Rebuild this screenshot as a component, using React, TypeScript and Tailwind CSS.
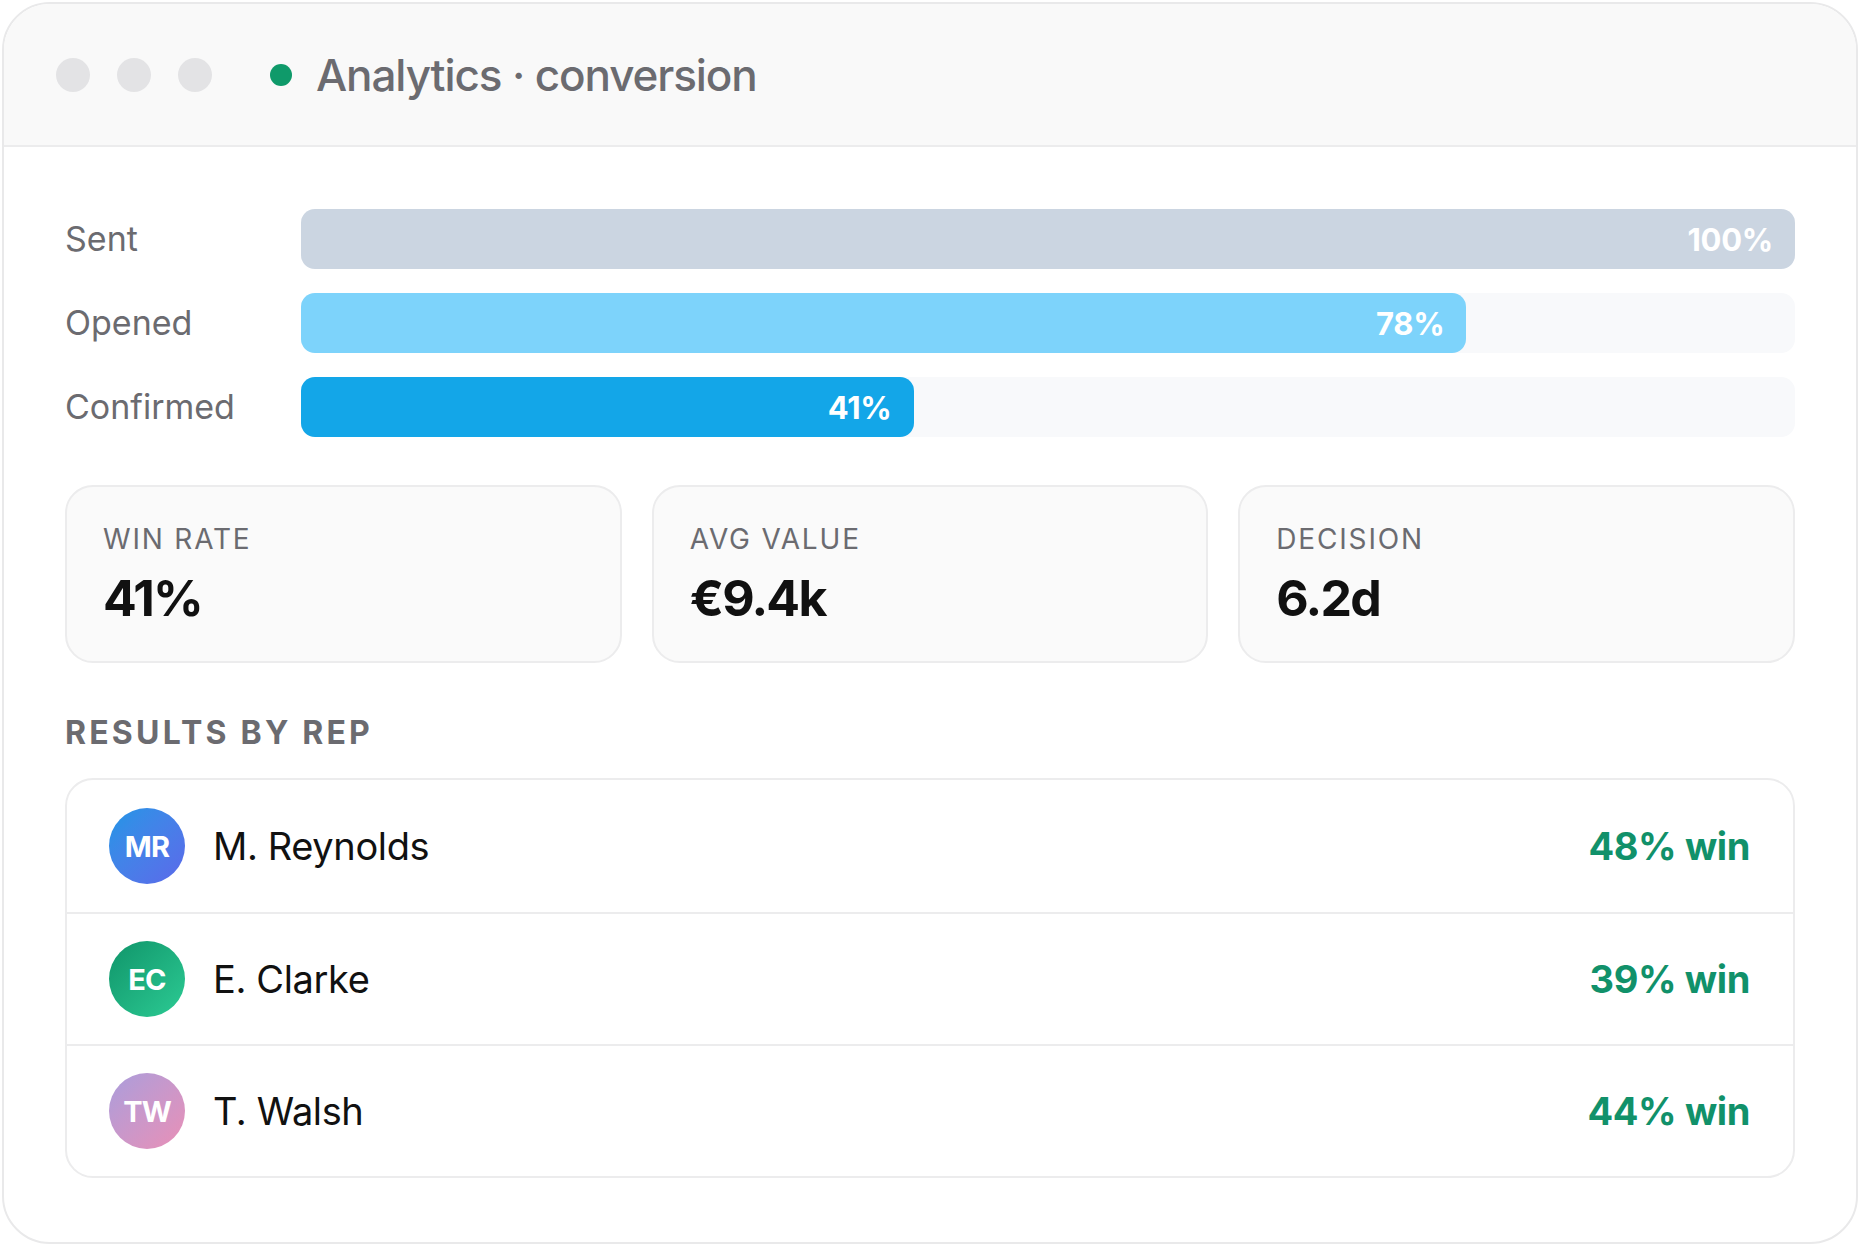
import React from 'react';

const funnel = [
  { label: 'Sent', pct: 100, bar: 'bg-[#cbd5e1]' },
  { label: 'Opened', pct: 78, bar: 'bg-[#7dd3fb]' },
  { label: 'Confirmed', pct: 41, bar: 'bg-[#13a6e8]' },
];

const stats = [
  { label: 'WIN RATE', value: '41%' },
  { label: 'AVG VALUE', value: '€9.4k' },
  { label: 'DECISION', value: '6.2d' },
];

const reps = [
  { initials: 'MR', name: 'M. Reynolds', win: '48% win', avatar: 'bg-gradient-to-br from-[#1a96e6] to-[#5a68ea]' },
  { initials: 'EC', name: 'E. Clarke', win: '39% win', avatar: 'bg-gradient-to-br from-[#0f956a] to-[#2ccb94]' },
  { initials: 'TW', name: 'T. Walsh', win: '44% win', avatar: 'bg-gradient-to-br from-[#a99ddc] to-[#e98fb6]' },
];

export default function App() {
  return (
    <div className="w-[1860px] h-[1246px] bg-white p-[2px] font-['Inter',sans-serif]">
      <div className="h-full rounded-[48px] border-2 border-[#e9e9ea] bg-white overflow-hidden flex flex-col">
        {/* window header */}
        <div className="h-[143px] shrink-0 bg-[#f9f9f9] border-b-2 border-[#ececed] flex items-center pl-[52px]">
          <div className="flex items-center gap-[27px]">
            <span className="w-[34px] h-[34px] rounded-full bg-[#e3e3e5]" />
            <span className="w-[34px] h-[34px] rounded-full bg-[#e3e3e5]" />
            <span className="w-[34px] h-[34px] rounded-full bg-[#e3e3e5]" />
          </div>
          <span className="ml-[58px] w-[22px] h-[22px] rounded-full bg-[#0f9a6a]" />
          <h1 className="ml-[24px] text-[44px] font-medium text-[#6b6b70] tracking-[-0.025em] leading-none">
            Analytics · conversion
          </h1>
        </div>

        <div className="flex-1 px-[61px] pt-[62px] pb-[62px] flex flex-col">
          {/* funnel bars */}
          <div className="flex flex-col gap-[24px]">
            {funnel.map(row => (
              <div key={row.label} className="flex items-center">
                <span className="w-[236px] shrink-0 text-[34px] text-[#6b6b70] leading-none">{row.label}</span>
                <div className="flex-1 h-[60px] rounded-[14px] bg-[#f8f9fb]">
                  <div
                    className={`h-full rounded-[14px] ${row.bar} flex items-center justify-end pr-[22px]`}
                    style={{ width: `${row.pct}%` }}
                  >
                    <span className="text-[31px] font-bold text-white leading-none tracking-[-0.01em]">{row.pct}%</span>
                  </div>
                </div>
              </div>
            ))}
          </div>

          {/* stat cards */}
          <div className="mt-[48px] grid grid-cols-3 gap-[30px]">
            {stats.map(s => (
              <div key={s.label} className="h-[178px] rounded-[28px] border-2 border-[#ececed] bg-[#fafafa] pl-[36px] pt-[35px]">
                <div className="text-[28px] text-[#6b6b70] tracking-[0.065em] leading-[34px]">{s.label}</div>
                <div className="mt-[14px] text-[50px] font-bold text-[#111] tracking-[-0.035em] leading-[56px]">{s.value}</div>
              </div>
            ))}
          </div>

          {/* results by rep */}
          <h2 className="mt-[52px] text-[32px] font-bold text-[#6b6b70] tracking-[0.1em] leading-[36px]">
            RESULTS BY REP
          </h2>
          <div className="mt-[27px] rounded-[28px] border-2 border-[#ececed] bg-white overflow-hidden">
            {reps.map((r, i) => (
              <div
                key={r.name}
                className={`h-[132px] flex items-center pl-[42px] pr-[43px] ${i > 0 ? 'border-t-2 border-[#ececed]' : ''}`}
              >
                <div className={`w-[76px] h-[76px] rounded-full ${r.avatar} flex items-center justify-center`}>
                  <span className="text-[29px] font-bold text-white tracking-[-0.03em] leading-none">{r.initials}</span>
                </div>
                <span className="ml-[28px] text-[38px] text-[#111] tracking-[-0.01em] leading-none">{r.name}</span>
                <span className="ml-auto text-[38px] font-bold text-[#11916a] tracking-[-0.01em] leading-none">{r.win}</span>
              </div>
            ))}
          </div>
        </div>
      </div>
    </div>
  );
}
